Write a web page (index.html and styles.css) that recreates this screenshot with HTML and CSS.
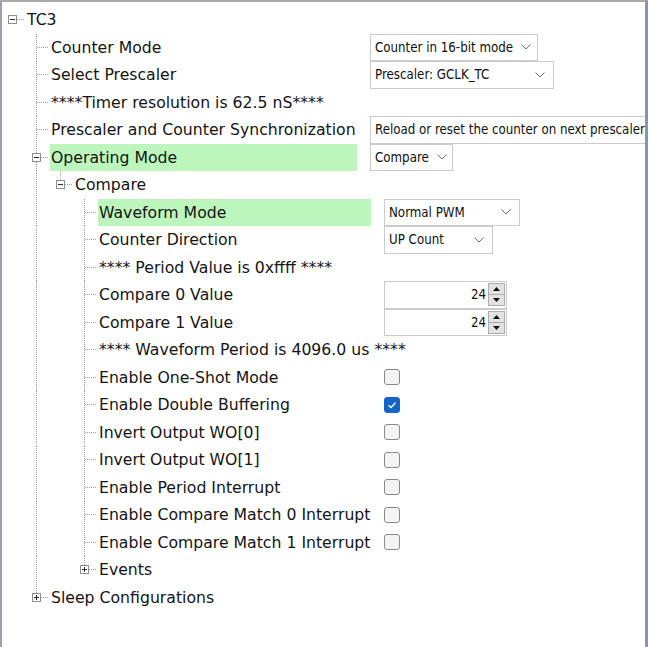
FILE: index.html
```html
<!DOCTYPE html>
<html>
<head>
<meta charset="utf-8">
<link rel="stylesheet" href="styles.css">
</head>
<body>
<div class="frame">
  <div class="row">
    <span class="c root"><span class="box minus"></span></span>
    <span class="lab">TC3</span>
  </div>
  <div class="row">
    <span class="g"></span><span class="c mid"></span>
    <span class="lab lab1">Counter Mode</span>
    <div class="dd w-mode"><span>Counter in 16-bit mode</span><svg class="chev" width="10" height="6" viewBox="0 0 10 6"><path d="M0.5 0.5 L5 5 L9.5 0.5"/></svg></div>
  </div>
  <div class="row">
    <span class="g"></span><span class="c mid"></span>
    <span class="lab lab1">Select Prescaler</span>
    <div class="dd w-presc"><span>Prescaler: GCLK_TC</span><svg class="chev" width="10" height="6" viewBox="0 0 10 6"><path d="M0.5 0.5 L5 5 L9.5 0.5"/></svg></div>
  </div>
  <div class="row">
    <span class="g"></span><span class="c mid"></span>
    <span class="lab lab1">****Timer resolution is 62.5 nS****</span>
  </div>
  <div class="row">
    <span class="g"></span><span class="c mid"></span>
    <span class="lab lab1">Prescaler and Counter Synchronization</span>
    <div class="dd w-sync"><span>Reload or reset the counter on next prescaler clock</span><svg class="chev" width="10" height="6" viewBox="0 0 10 6"><path d="M0.5 0.5 L5 5 L9.5 0.5"/></svg></div>
  </div>
  <div class="row">
    <span class="g"></span><span class="c mid"><span class="box minus"></span></span>
    <span class="lab lab1 hl">Operating Mode</span>
    <div class="dd w-cmp"><span>Compare</span><svg class="chev" width="10" height="6" viewBox="0 0 10 6"><path d="M0.5 0.5 L5 5 L9.5 0.5"/></svg></div>
  </div>
  <div class="row">
    <span class="g"></span><span class="g line"></span><span class="c last"><span class="box minus"></span></span>
    <span class="lab">Compare</span>
  </div>
  <div class="row">
    <span class="g"></span><span class="g line"></span><span class="g"></span><span class="c mid"></span>
    <span class="lab lab3 hl">Waveform Mode</span>
    <div class="dd w-wave"><span>Normal PWM</span><svg class="chev" width="10" height="6" viewBox="0 0 10 6"><path d="M0.5 0.5 L5 5 L9.5 0.5"/></svg></div>
  </div>
  <div class="row">
    <span class="g"></span><span class="g line"></span><span class="g"></span><span class="c mid"></span>
    <span class="lab lab3">Counter Direction</span>
    <div class="dd w-dir"><span>UP Count</span><svg class="chev" width="10" height="6" viewBox="0 0 10 6"><path d="M0.5 0.5 L5 5 L9.5 0.5"/></svg></div>
  </div>
  <div class="row">
    <span class="g"></span><span class="g line"></span><span class="g"></span><span class="c mid"></span>
    <span class="lab lab3">**** Period Value is 0xffff ****</span>
  </div>
  <div class="row">
    <span class="g"></span><span class="g line"></span><span class="g"></span><span class="c mid"></span>
    <span class="lab lab3">Compare 0 Value</span>
    <div class="spin"><span class="num">24</span><span class="btns"><span class="sb"><svg width="7" height="4" viewBox="0 0 7 4"><path d="M3.5 0 L7 4 L0 4 Z"/></svg></span><span class="sb"><svg width="7" height="4" viewBox="0 0 7 4"><path d="M0 0 L7 0 L3.5 4 Z"/></svg></span></span></div>
  </div>
  <div class="row">
    <span class="g"></span><span class="g line"></span><span class="g"></span><span class="c mid"></span>
    <span class="lab lab3">Compare 1 Value</span>
    <div class="spin"><span class="num">24</span><span class="btns"><span class="sb"><svg width="7" height="4" viewBox="0 0 7 4"><path d="M3.5 0 L7 4 L0 4 Z"/></svg></span><span class="sb"><svg width="7" height="4" viewBox="0 0 7 4"><path d="M0 0 L7 0 L3.5 4 Z"/></svg></span></span></div>
  </div>
  <div class="row">
    <span class="g"></span><span class="g line"></span><span class="g"></span><span class="c mid"></span>
    <span class="lab lab3">**** Waveform Period is 4096.0 us ****</span>
  </div>
  <div class="row">
    <span class="g"></span><span class="g line"></span><span class="g"></span><span class="c mid"></span>
    <span class="lab lab3">Enable One-Shot Mode</span>
    <span class="cb"></span>
  </div>
  <div class="row">
    <span class="g"></span><span class="g line"></span><span class="g"></span><span class="c mid"></span>
    <span class="lab lab3">Enable Double Buffering</span>
    <span class="cb on"><svg width="14" height="14" viewBox="0 0 14 14"><path d="M3.5 7.2 L6 9.5 L10.5 4.8"/></svg></span>
  </div>
  <div class="row">
    <span class="g"></span><span class="g line"></span><span class="g"></span><span class="c mid"></span>
    <span class="lab lab3">Invert Output WO[0]</span>
    <span class="cb"></span>
  </div>
  <div class="row">
    <span class="g"></span><span class="g line"></span><span class="g"></span><span class="c mid"></span>
    <span class="lab lab3">Invert Output WO[1]</span>
    <span class="cb"></span>
  </div>
  <div class="row">
    <span class="g"></span><span class="g line"></span><span class="g"></span><span class="c mid"></span>
    <span class="lab lab3">Enable Period Interrupt</span>
    <span class="cb"></span>
  </div>
  <div class="row">
    <span class="g"></span><span class="g line"></span><span class="g"></span><span class="c mid"></span>
    <span class="lab lab3">Enable Compare Match 0 Interrupt</span>
    <span class="cb"></span>
  </div>
  <div class="row">
    <span class="g"></span><span class="g line"></span><span class="g"></span><span class="c mid"></span>
    <span class="lab lab3">Enable Compare Match 1 Interrupt</span>
    <span class="cb"></span>
  </div>
  <div class="row">
    <span class="g"></span><span class="g line"></span><span class="g"></span><span class="c last"><span class="box plus"></span></span>
    <span class="lab">Events</span>
  </div>
  <div class="row">
    <span class="g"></span><span class="c last"><span class="box plus"></span></span>
    <span class="lab">Sleep Configurations</span>
  </div>
</div>
</body>
</html>
```

FILE: styles.css
```css
html, body {
  margin: 0;
  padding: 0;
  background: #fff;
}

.frame {
  width: 648px;
  height: 647px;
  box-sizing: border-box;
  border-top: 2px solid #a9a9a9;
  border-left: 2px solid #98a2b1;
  border-right: 3px solid #8a95a7;
  padding-top: 4px;
  overflow: hidden;
  background: #fff;
  font-family: "DejaVu Sans", Verdana, sans-serif;
  font-size: 15.7px;
  color: #141414;
}

.row {
  display: flex;
  align-items: center;
  height: 27.5px;
  white-space: nowrap;
}

/* tree guide cells */
.g {
  flex: none;
  width: 24px;
  height: 100%;
}

.g.line {
  background: repeating-linear-gradient(to bottom, #9c9c9c 0 1px, transparent 1px 2px) 10px 0 / 1px 100% no-repeat;
}

.c {
  flex: none;
  width: 24px;
  height: 100%;
  box-sizing: border-box;
  padding-left: 6px;
  display: flex;
  align-items: center;
}

.c.root {
  background: repeating-linear-gradient(to right, #9c9c9c 0 1px, transparent 1px 2px) 11px 50% / 11px 1px no-repeat;
}

.c.mid {
  background:
    repeating-linear-gradient(to right, #9c9c9c 0 1px, transparent 1px 2px) 11px 50% / 11px 1px no-repeat,
    repeating-linear-gradient(to bottom, #9c9c9c 0 1px, transparent 1px 2px) 10px 0 / 1px 100% no-repeat;
}

.c.last {
  background:
    repeating-linear-gradient(to right, #9c9c9c 0 1px, transparent 1px 2px) 11px 50% / 11px 1px no-repeat,
    repeating-linear-gradient(to bottom, #9c9c9c 0 1px, transparent 1px 2px) 10px 0 / 1px 50% no-repeat;
}

.box {
  width: 9px;
  height: 9px;
  box-sizing: border-box;
  border: 1px solid #8f8f8f;
  background-color: #fff;
}

.box.minus {
  background: #fff linear-gradient(#2a2a2a, #2a2a2a) center / 5px 1px no-repeat;
}

.box.plus {
  background:
    linear-gradient(#2a2a2a, #2a2a2a) center / 5px 1px no-repeat,
    linear-gradient(#2a2a2a, #2a2a2a) center / 1px 5px no-repeat,
    #fff;
}

/* labels */
.lab {
  flex: none;
  height: 100%;
  box-sizing: border-box;
  padding-left: 1px;
  display: flex;
  align-items: center;
}

.lab1 {
  width: 307px;
  margin-right: 13px;
}

.lab3 {
  width: 273px;
  margin-right: 13px;
}

.hl {
  background: #bdf6bd;
}

/* dropdowns */
.dd {
  flex: none;
  height: 100%;
  box-sizing: border-box;
  border: 1px solid #cbcbcb;
  background: #fff;
  display: flex;
  align-items: center;
  justify-content: space-between;
  padding: 0 8px 0 4px;
  font-family: "DejaVu Sans Condensed", "Liberation Sans", Arial, sans-serif;
  font-size: 13.2px;
  color: #111;
  overflow: hidden;
}

.dd .chev {
  flex: none;
  margin-left: 8px;
}

.chev path {
  fill: none;
  stroke: #6e6e6e;
  stroke-width: 1;
}

.w-mode { width: 168px; }
.w-presc { width: 184px; }
.w-sync { width: 360px; }
.w-cmp { width: 83px; }
.w-wave { width: 136px; }
.w-dir { width: 109px; }

/* spinner */
.spin {
  flex: none;
  width: 123px;
  height: 100%;
  box-sizing: border-box;
  border: 1px solid #cbcbcb;
  background: #fff;
  display: flex;
  align-items: center;
  padding: 0 1px 0 4px;
  font-family: "DejaVu Sans Condensed", "Liberation Sans", Arial, sans-serif;
  font-size: 13.2px;
  color: #111;
}

.num {
  flex: 1;
  text-align: right;
  padding-right: 2px;
}

.btns {
  flex: none;
  display: flex;
  flex-direction: column;
  width: 17px;
}

.sb {
  height: 12px;
  box-sizing: border-box;
  border: 1px solid #adadad;
  background: #e2e2e2;
  display: flex;
  align-items: center;
  justify-content: center;
}

.sb + .sb {
  border-top: none;
  height: 11px;
}

.sb path {
  fill: #111;
}

/* checkboxes */
.cb {
  flex: none;
  width: 16px;
  height: 16px;
  box-sizing: border-box;
  border: 1px solid #8a8a8a;
  border-radius: 3px;
  background: #f4f4f4;
  display: flex;
  align-items: center;
  justify-content: center;
}

.cb.on {
  background: #1565c7;
  border-color: #1565c7;
}

.cb.on path {
  fill: none;
  stroke: #fff;
  stroke-width: 1.3;
}
```
